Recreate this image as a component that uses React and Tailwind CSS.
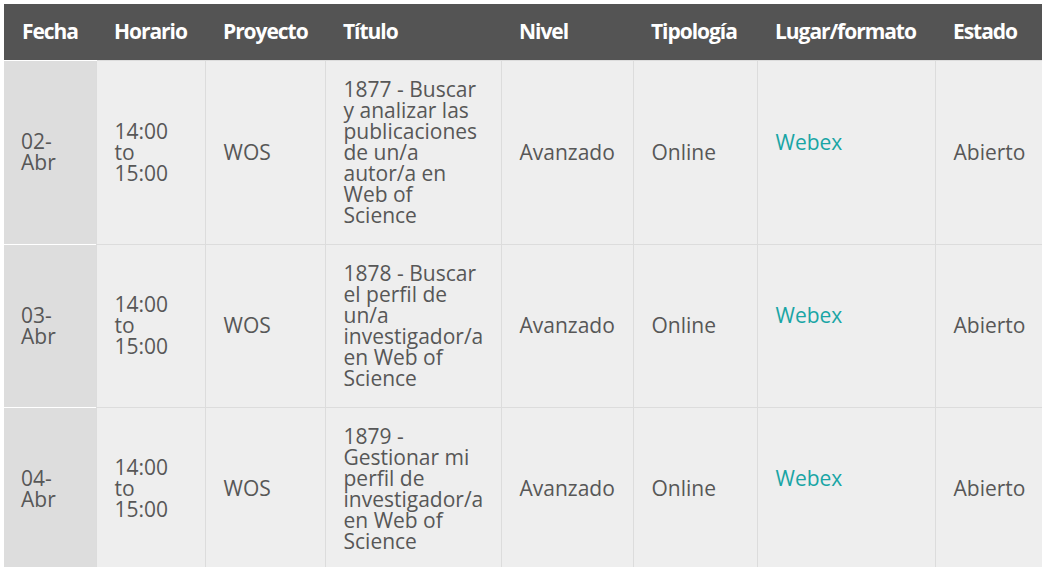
import React from 'react';

const headers = ['Fecha', 'Horario', 'Proyecto', 'Título', 'Nivel', 'Tipología', 'Lugar/formato', 'Estado'];
const widths = ['w-[92px]', 'w-[109px]', 'w-[120px]', 'w-[176px]', 'w-[132px]', 'w-[124px]', 'w-[178px]', 'w-[107px]'];

const rows = [
    { fecha: ['02-', 'Abr'], titulo: '1877 - Buscar y analizar las publicaciones de un/a autor/a en Web of Science' },
    { fecha: ['03-', 'Abr'], titulo: '1878 - Buscar el perfil de un/a investigador/a en Web of Science' },
    { fecha: ['04-', 'Abr'], titulo: '1879 - Gestionar mi perfil de investigador/a en Web of Science' },
];

const Cell = ({ children, className = '' }) => (
    <td className={`pl-[18px] py-[18px] align-middle border-l border-[#dcdcdc] ${className}`}>{children}</td>
);

export default function App() {
    return (
        <div className="bg-white min-h-screen pt-[4px] pl-[4px] font-['Open_Sans',sans-serif]">
            <table className="table-fixed border-collapse w-[1038px] text-[21px] leading-[21px] text-[#575757]">
                <thead>
                    <tr className="bg-[#545454] h-[56px]">
                        {headers.map((h, i) => (
                            <th key={h} className={`${widths[i]} px-[18px] text-left font-bold text-white text-[21px] tracking-[-0.05em]`}>{h}</th>
                        ))}
                    </tr>
                </thead>
                <tbody>
                    {rows.map((r, idx) => (
                        <tr key={idx} className="bg-[#eeeeee] border-t border-[#dcdcdc]">
                            <td className="px-[17px] py-[18px] align-middle bg-[#dddddd] border-t border-white">
                                {r.fecha[0]}<br />{r.fecha[1]}
                            </td>
                            <Cell className="pr-[10px]">14:00<br />to<br />15:00</Cell>
                            <Cell className="pr-[10px]">WOS</Cell>
                            <Cell className="pr-[12px]">{r.titulo}</Cell>
                            <Cell className="pr-[10px]">Avanzado</Cell>
                            <Cell className="pr-[10px]">Online</Cell>
                            <Cell className="pr-[10px]"><p className="mb-[20px] text-[#19a5a5]">Webex</p></Cell>
                            <Cell className="pr-[10px]">Abierto</Cell>
                        </tr>
                    ))}
                </tbody>
            </table>
        </div>
    );
}
